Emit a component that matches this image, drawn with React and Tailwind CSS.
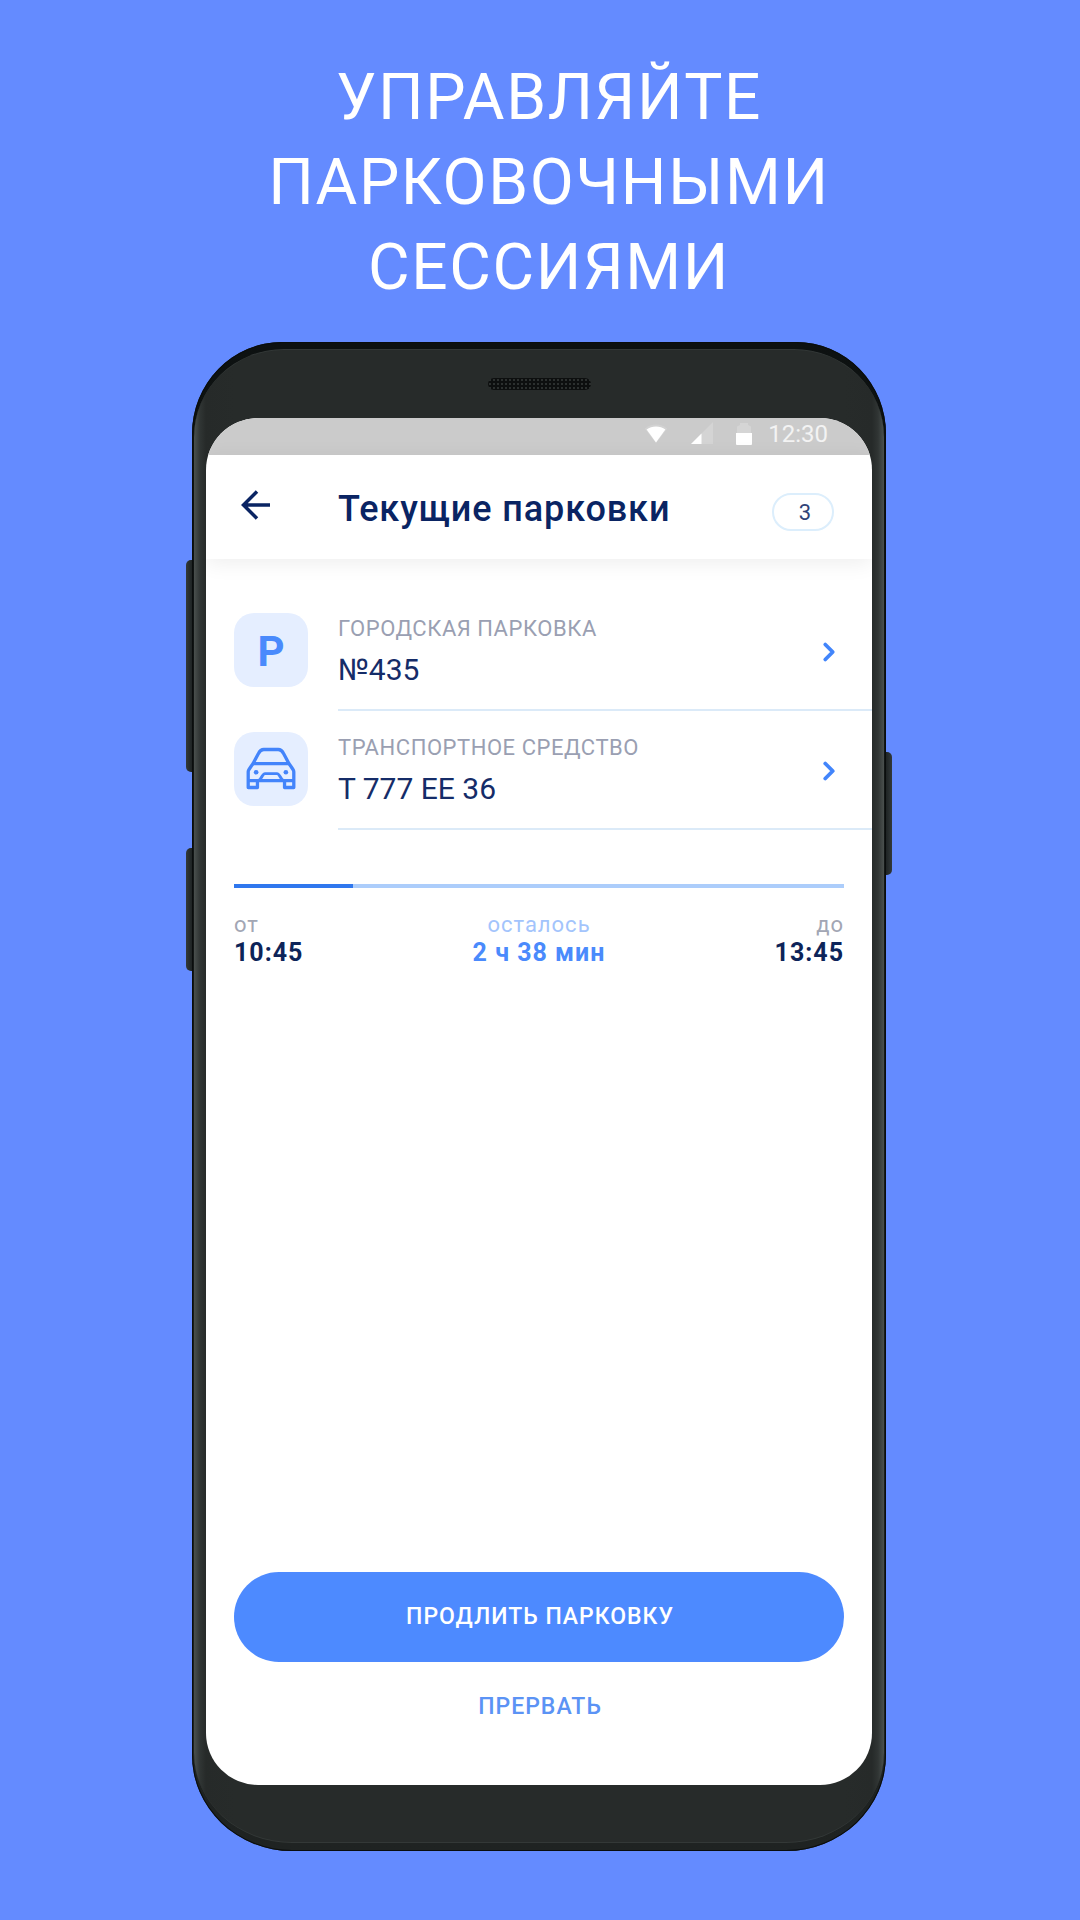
import { ChevronRight } from "lucide-react";

function WifiIcon() {
  return (
    <svg viewBox="0 0 24 24" className="size-6" aria-hidden="true">
      <path d="M12 21 .8 6.800C4 4 8 2.600 12 2.600S20 4 23.200 6.800Z" fill="#fff" opacity=".15" />
      <path d="M12 20.500 2.600 7.600C5.300 5.500 8.500 4.500 12 4.500s6.700 1 9.400 3.100Z" fill="#fff" />
    </svg>
  );
}

function SignalIcon() {
  return (
    <svg viewBox="0 0 24 24" className="size-6" aria-hidden="true">
      <path d="M1 22 23 0v22Z" fill="#fff" opacity=".18" />
      <path d="M1 22 11.500 11.500V22Z" fill="#fff" />
    </svg>
  );
}

function BatteryIcon() {
  return (
    <svg viewBox="0 0 16 24" className="h-6 w-4" aria-hidden="true">
      <path d="M1 11V4.500L4 3V1h8v2l3 1.500V11Z" fill="#fff" opacity=".2" />
      <path d="M0 11h16v11a1 1 0 0 1-1 1H1a1 1 0 0 1-1-1Z" fill="#fff" />
    </svg>
  );
}

function BackIcon() {
  return (
    <svg viewBox="0 0 30 30" className="size-[30px]" fill="none" stroke="#0a2463" strokeWidth="3.500" aria-hidden="true">
      <path d="M29 15H3M16 1.500 2.500 15 16 28.500" />
    </svg>
  );
}

function CarIcon() {
  return (
    <svg viewBox="0 0 224 224" className="size-full" fill="none" stroke="#4384fb" strokeWidth="10" aria-hidden="true">
      <path d="M43 168v-48c0-6 12-19 16-27l15-28c4-8 8-12 16-12h44c8 0 12 4 16 12l15 28c4 8 16 21 16 27v48h-28v-21H71v21H43Z" strokeLinejoin="round" />
      <path d="M57 96h110M43 147h28M181 147h-28" />
      <path d="M76 146c8-5 10-20 18-20h36c8 0 10 15 18 20" strokeWidth="9" />
      <circle cx="67" cy="122" r="7" fill="#4384fb" stroke="none" />
      <circle cx="157" cy="122" r="7" fill="#4384fb" stroke="none" />
    </svg>
  );
}

const rows = [
  {
    label: "ГОРОДСКАЯ ПАРКОВКА",
    value: "№435",
    icon: <span className="pt-1 text-[42px] leading-none font-bold text-[#4a8afc]">P</span>,
  },
  { label: "ТРАНСПОРТНОЕ СРЕДСТВО", value: "Т 777 ЕЕ 36", icon: <CarIcon /> },
];

function StatusBar() {
  return (
    <div className="flex h-[37px] items-center justify-end gap-4 bg-[#cbcbcb] pr-11 pb-[6px]">
      <div className="flex items-center gap-[22px]">
        <WifiIcon />
        <SignalIcon />
        <BatteryIcon />
      </div>
      <span className="text-[24px] leading-6 text-[#f3f3f3]">12:30</span>
    </div>
  );
}

function TopBar() {
  return (
    <header className="flex h-[104px] items-center pr-[38px] pl-[35px] shadow-[0_4px_20px_rgba(0,0,0,0.07)]">
      <button type="button" aria-label="Назад" className="pb-1">
        <BackIcon />
      </button>
      <h2 className="ml-[67px] flex-1 pt-1 text-[36px] leading-10 font-medium tracking-wide text-[#0a2463]">
        Текущие парковки
      </h2>
      <span className="mt-[10px] flex h-[38px] w-[62px] items-center justify-center rounded-full border-2 border-[#dceefc] pl-1 text-[22px] text-[#2f4377]">
        3
      </span>
    </header>
  );
}

function InfoRow({ icon, label, value }) {
  return (
    <button type="button" className="flex w-full items-start pl-7 text-left">
      <span className="mt-[21px] flex size-[74px] items-center justify-center overflow-hidden rounded-[20px] bg-[#e5eeff]">
        {icon}
      </span>
      <span className="ml-[30px] flex h-[119px] flex-1 items-start border-b-2 border-[#dbeaf8] pt-[23px] pr-7">
        <span className="flex-1">
          <span className="block text-[22px] leading-7 tracking-wide text-[#9a9fb2]">{label}</span>
          <span className="mt-2 block text-[30px] leading-[38px] text-[#152c68]">{value}</span>
        </span>
        <ChevronRight className="mt-[22px] size-[30px] text-[#4285fb]" strokeWidth={3} />
      </span>
    </button>
  );
}

function TimeLabel({ title, value, align, titleColor, valueColor }) {
  return (
    <div className={align}>
      <div className={`text-[22px] leading-7 tracking-[1px] ${titleColor}`}>{title}</div>
      <div className={`text-[25px] leading-7 font-bold tracking-[1px] ${valueColor}`}>{value}</div>
    </div>
  );
}

function Session() {
  const progress = 19.5;

  return (
    <section className="px-7 pt-[54px]">
      <div className="h-1 bg-[#accdfb]">
        <div className="h-full bg-[#2f77ee]" style={{ width: `${progress}%` }} />
      </div>
      <div className="mt-[23px] grid grid-cols-3">
        <TimeLabel title="от" value="10:45" align="text-left" titleColor="text-[#a2a6b4]" valueColor="text-[#0d2459]" />
        <TimeLabel title="осталось" value="2 ч 38 мин" align="text-center" titleColor="text-[#a3c4fc]" valueColor="text-[#4a8afc]" />
        <TimeLabel title="до" value="13:45" align="text-right" titleColor="text-[#a2a6b4]" valueColor="text-[#0d2459]" />
      </div>
    </section>
  );
}

function Screen() {
  return (
    <div className="flex min-h-[1367px] flex-col overflow-hidden rounded-[52px] bg-white">
      <StatusBar />
      <TopBar />
      <div className="pt-[33px]">
        {rows.map((row) => (
          <InfoRow key={row.label} {...row} />
        ))}
      </div>
      <Session />
      <div className="mt-auto flex flex-col items-center px-7 pb-14">
        <button type="button" className="h-[90px] w-full rounded-full bg-[#4d8aff] pl-0.5 text-[23px] font-medium tracking-[1px] text-white">
          ПРОДЛИТЬ ПАРКОВКУ
        </button>
        <button type="button" className="mt-[23px] h-11 pl-0.5 text-[23px] font-medium tracking-[1px] text-[#5b93f5]">
          ПРЕРВАТЬ
        </button>
      </div>
    </div>
  );
}

function Phone() {
  return (
    <div className="relative w-full max-w-[694px]">
      {/* side keys */}
      <span className="absolute top-[218px] -left-[6px] h-[212px] w-3 rounded-[5px] bg-linear-to-r from-[#33393a] to-[#0b0f0f]" />
      <span className="absolute top-[506px] -left-[6px] h-[123px] w-3 rounded-[5px] bg-linear-to-r from-[#33393a] to-[#0b0f0f]" />
      <span className="absolute top-[410px] -right-[6px] h-[123px] w-3 rounded-[5px] bg-linear-to-l from-[#33393a] to-[#0b0f0f]" />

      <div className="relative rounded-[90px_90px_100px_100px/92px_92px_96px_96px] bg-linear-to-b from-[#0d1111] to-[#1f2322] px-[2px] pt-[7px] pb-[8px] shadow-[inset_0_0_0_1px_#0a0d0d]">
        <div className="rounded-[90px_90px_98px_98px/88px_88px_90px_90px] border-y border-[#333837] bg-[linear-gradient(90deg,#4a504e_0,#303534_6px,#262a29_12px,#272b2a_40px,#272b2a_calc(100%_-_40px),#262a29_calc(100%_-_12px),#303534_calc(100%_-_6px),#4a504e_100%)] px-3 pb-[57px]">
          <div className="flex h-[68px] justify-center pt-[28px]">
            <span className="h-3 w-[103px] rounded-full bg-[#0d0f0f] bg-[radial-gradient(#2c302f_1px,transparent_1px)] bg-[size:4px_4px]" />
          </div>
          <Screen />
        </div>
      </div>
    </div>
  );
}

export default function App() {
  return (
    <main className="flex min-h-screen flex-col items-center bg-[#648bff] pr-0.5 pb-[69px] font-['Roboto',sans-serif]">
      <h1 className="pt-[55px] pb-8 pl-5 text-center text-[64px] leading-[85px] tracking-wide text-white">
        УПРАВЛЯЙТЕ
        <br />
        ПАРКОВОЧНЫМИ
        <br />
        СЕССИЯМИ
      </h1>
      <Phone />
    </main>
  );
}
